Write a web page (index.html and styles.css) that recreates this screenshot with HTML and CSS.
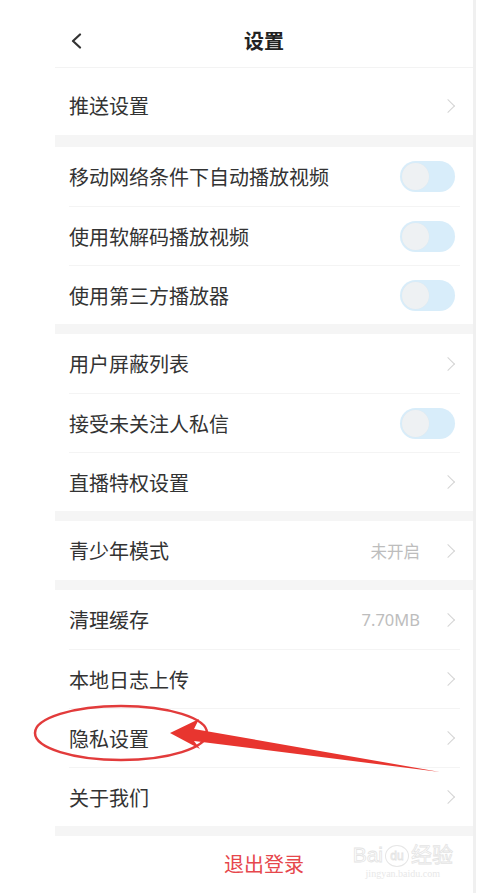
FILE: index.html
```html
<!DOCTYPE html>
<html lang="zh-CN">

<head>
    <meta charset="UTF-8">
    <meta name="viewport" content="width=device-width, initial-scale=1.0">
    <title>设置</title>
    <link rel="stylesheet" href="styles.css">
</head>

<body>
    <div class="screen">
        <header class="topbar">
            <svg class="back" width="12" height="16" viewBox="0 0 12 16">
                <polyline points="10,1.5 3,8 10,14.5" fill="none" stroke="#333" stroke-width="2.2"
                    stroke-linecap="round" stroke-linejoin="round" />
            </svg>
            <h1>设置</h1>
            <span></span>
        </header>

        <div class="group first">
            <div class="row"><span class="label">推送设置</span><i class="chev"></i></div>
        </div>

        <div class="group">
            <div class="row"><span class="label">移动网络条件下自动播放视频</span><span class="toggle"></span></div>
            <div class="row"><span class="label">使用软解码播放视频</span><span class="toggle"></span></div>
            <div class="row"><span class="label">使用第三方播放器</span><span class="toggle"></span></div>
        </div>

        <div class="group">
            <div class="row"><span class="label">用户屏蔽列表</span><i class="chev"></i></div>
            <div class="row"><span class="label">接受未关注人私信</span><span class="toggle"></span></div>
            <div class="row"><span class="label">直播特权设置</span><i class="chev"></i></div>
        </div>

        <div class="group">
            <div class="row"><span class="label">青少年模式</span><span class="value">未开启</span><i class="chev"></i></div>
        </div>

        <div class="group">
            <div class="row"><span class="label">清理缓存</span><span class="value">7.70MB</span><i class="chev"></i></div>
            <div class="row"><span class="label">本地日志上传</span><i class="chev"></i></div>
            <div class="row"><span class="label">隐私设置</span><i class="chev"></i></div>
            <div class="row"><span class="label">关于我们</span><i class="chev"></i></div>
        </div>

        <div class="logout">
            退出登录
            <div class="watermark">
                <div class="wm-logo">Bai<span class="paw">du</span>经验</div>
                <div class="wm-url">jingyan.baidu.com</div>
            </div>
        </div>
    </div>

    <!-- red marker drawn over the screenshot -->
    <svg class="marker" width="481" height="893" viewBox="0 0 481 893">
        <ellipse cx="121" cy="733" rx="86" ry="27" fill="none" stroke="#e23b3b" stroke-width="2.5" />
        <polygon points="170,733 199,719 194,729 440,772 194,741 200,749" fill="#e8352f" />
    </svg>
</body>

</html>
```

FILE: styles.css
```css
body {
    margin: 0;
    background: #fff;
    font-family: "Noto Sans CJK SC", "Noto Sans", sans-serif;
    color: #333;
    position: relative;
    height: 893px;
    overflow: hidden;
}

.screen {
    margin-left: 55px;
    width: 418px;
    height: 893px;
    border-right: 3px solid #f0f0f0;
    display: flex;
    flex-direction: column;
}

.topbar {
    height: 53px;
    padding: 14px 15px 0 15px;
    border-bottom: 1px solid #f3f3f3;
    display: grid;
    grid-template-columns: 1fr auto 1fr;
    align-items: center;
}

.topbar h1 {
    margin: 0;
    font-size: 20px;
    font-weight: bold;
    color: #222;
}

.back {
    display: block;
}

.group {
    border-bottom: 10px solid #f5f5f5;
}

.group.first {
    padding-top: 8px;
    border-bottom-width: 12px;
}

.row {
    height: 59px;
    margin: 0 13px 0 14px;
    padding-right: 5px;
    display: flex;
    align-items: center;
    box-sizing: border-box;
}

.row + .row {
    border-top: 1px solid #f4f4f4;
}

.label {
    flex: 1;
    font-size: 20px;
}

.value {
    font-size: 16.5px;
    color: #bdbdbd;
    margin-right: 23px;
    font-family: "Noto Sans", "Noto Sans CJK SC", sans-serif;
}

.chev {
    width: 10px;
    height: 10px;
    margin-right: 2px;
    border-top: 1.2px solid #d4d4d4;
    border-right: 1.2px solid #d4d4d4;
    box-sizing: border-box;
    transform: rotate(45deg);
}

.toggle {
    width: 55px;
    height: 31px;
    border-radius: 16px;
    background: #d8edfa;
    display: flex;
    align-items: center;
    padding-left: 2px;
    box-sizing: border-box;
}

.toggle::after {
    content: "";
    width: 27px;
    height: 27px;
    border-radius: 50%;
    background: #eef1f3;
    box-shadow: 0 0 1px #dfe4e8;
}

.logout {
    flex: 1;
    display: flex;
    justify-content: center;
    align-items: center;
    padding-bottom: 2px;
    font-size: 20px;
    color: #e6474c;
    position: relative;
}

.watermark {
    position: absolute;
    right: 20px;
    top: 6px;
    text-align: center;
    color: transparent;
    -webkit-text-stroke: 0.8px #e4e4e4;
}

.wm-logo {
    font-family: "Liberation Sans", sans-serif;
    font-size: 21px;
    line-height: 26px;
}

.paw {
    display: inline-block;
    font-size: 12px;
    line-height: 20px;
    width: 22px;
    border: 1px solid #e6e6e6;
    border-radius: 50%;
    margin: 0 2px;
    vertical-align: 2px;
}

.wm-url {
    font-family: "Liberation Serif", serif;
    font-size: 10px;
    -webkit-text-stroke: 0;
    color: #e8e8e8;
}

.marker {
    position: absolute;
    left: 0;
    top: 0;
    pointer-events: none;
}
```
